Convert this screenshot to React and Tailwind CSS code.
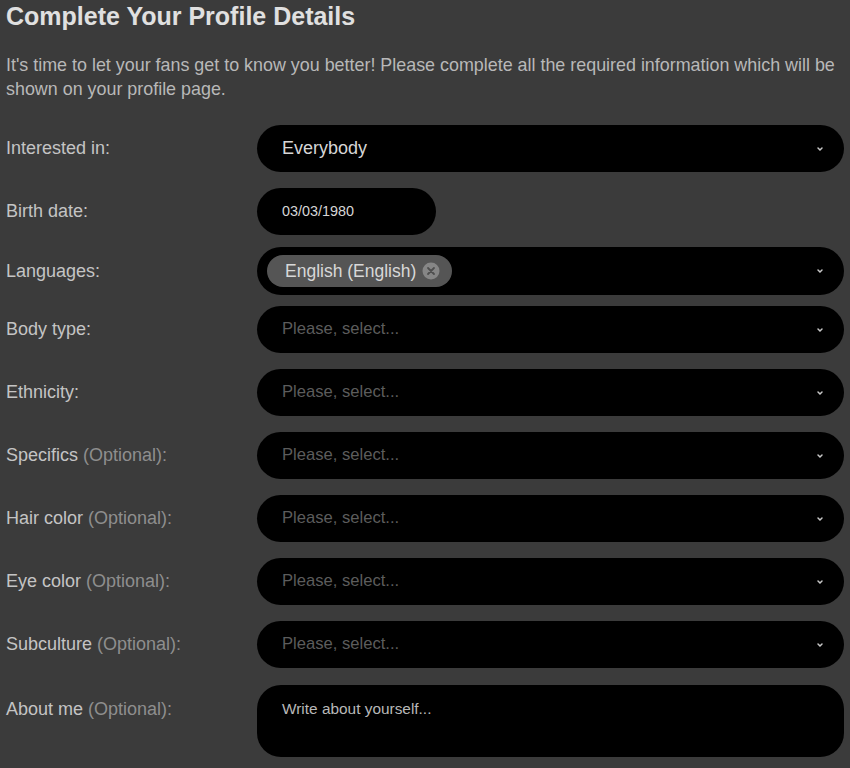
import React from 'react';

const Chevron = () => (
  <svg width="8" height="6" viewBox="0 0 8 6" className="shrink-0">
    <path d="M2 2 L4 4 L6 2" stroke="#c8c8c8" strokeWidth="1.5" fill="none" strokeLinecap="round" />
  </svg>
);

const SelectField = ({ value, placeholder = 'Please, select...', className = '' }) => (
  <div className={`h-[47px] bg-black rounded-full flex items-center justify-between pl-[25px] pr-[20px] ${className}`}>
    {value ? (
      <span className="text-[18px] text-[#d6d6d6]">{value}</span>
    ) : (
      <span className="text-[16.6px] text-[#5c5c5c]">{placeholder}</span>
    )}
    <Chevron />
  </div>
);

const Label = ({ text, optional, className = '' }) => (
  <div className={`text-[18px] text-[#c4c4c4] ${className}`}>
    {text}
    {optional && <span className="text-[#8e8e8e]"> (Optional)</span>}
    <span className={optional ? 'text-[#8e8e8e]' : ''}>:</span>
  </div>
);

const Row = ({ label, optional, children, className = '' }) => (
  <div className={`grid grid-cols-[251px_1fr] items-center ${className}`}>
    <Label text={label} optional={optional} />
    {children}
  </div>
);

export default function App() {
  const selects = [
    { label: 'Body type', optional: false, mt: 'mt-[11px]' },
    { label: 'Ethnicity', optional: false, mt: 'mt-[16px]' },
    { label: 'Specifics', optional: true, mt: 'mt-[16px]' },
    { label: 'Hair color', optional: true, mt: 'mt-[16px]' },
    { label: 'Eye color', optional: true, mt: 'mt-[16px]' },
    { label: 'Subculture', optional: true, mt: 'mt-[16px]' },
  ];

  return (
    <div className="min-h-[768px] w-[850px] bg-[#3b3b3b] px-[6px] font-[Liberation_Sans,Arial,sans-serif] overflow-hidden">
      <h1 className="pt-[2px] text-[25px] leading-[28px] font-bold text-[#e0e0e0]">Complete Your Profile Details</h1>

      <p className="mt-[23px] text-[17.9px] leading-[24px] text-[#b8b8b8]">
        It's time to let your fans get to know you better! Please complete all the required information which will be shown on your profile page.
      </p>

      <div className="mt-[24px]">
        <Row label="Interested in">
          <SelectField value="Everybody" />
        </Row>

        <Row label="Birth date" className="mt-[16px]">
          <div className="h-[47px] w-[179px] bg-black rounded-full flex items-center pl-[25px]">
            <span className="text-[14.4px] text-[#d6d6d6]">03/03/1980</span>
          </div>
        </Row>

        <Row label="Languages" className="mt-[12px]">
          <div className="h-[48px] bg-black rounded-full flex items-center justify-between pl-[10px] pr-[20px]">
            <div className="h-[32px] bg-[#555555] rounded-full flex items-center pl-[18px] pr-[12px] gap-[6px]">
              <span className="text-[17.5px] text-[#d8d8d8]">English (English)</span>
              <svg width="18" height="18" viewBox="0 0 18 18">
                <circle cx="9" cy="9" r="8.5" fill="#868686" />
                <path d="M6 6 L12 12 M12 6 L6 12" stroke="#4e4e4e" strokeWidth="1.8" strokeLinecap="round" />
              </svg>
            </div>
            <Chevron />
          </div>
        </Row>

        {selects.map((s) => (
          <Row key={s.label} label={s.label} optional={s.optional} className={s.mt}>
            <SelectField />
          </Row>
        ))}

        <div className="grid grid-cols-[251px_1fr] items-start mt-[17px]">
          <Label text="About me" optional className="pt-[11px]" />
          <div className="h-[72px] bg-black rounded-[24px] pl-[25px] pt-[12px]">
            <span className="text-[15.4px] text-[#b8b8b8]">Write about yourself...</span>
          </div>
        </div>
      </div>
    </div>
  );
}
